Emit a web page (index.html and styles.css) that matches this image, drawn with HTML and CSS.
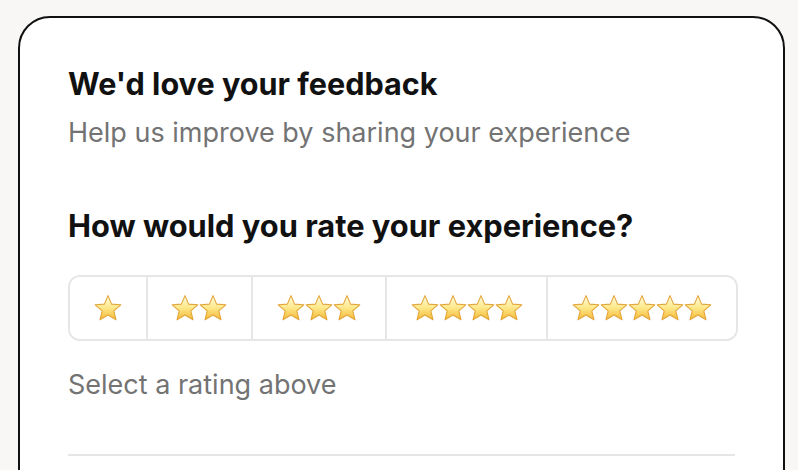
FILE: index.html
```html
<!DOCTYPE html>
<html lang="en">
<head>
<meta charset="utf-8">
<title>Feedback</title>
<link rel="stylesheet" href="styles.css">
</head>
<body>
<svg class="defs" width="0" height="0" aria-hidden="true">
  <defs>
    <linearGradient id="starFill" x1="0" y1="0" x2="0" y2="1">
      <stop offset="0" stop-color="#fffbe2"/>
      <stop offset="0.5" stop-color="#fde88a"/>
      <stop offset="1" stop-color="#f4b936"/>
    </linearGradient>
    <symbol id="star" viewBox="0 0 28 28">
      <path d="M14 1.6 L17.6 10.1 L26.8 10.8 L19.8 16.9 L22 25.8 L14 21 L6 25.8 L8.2 16.9 L1.2 10.8 L10.4 10.1 Z" fill="url(#starFill)" stroke="#e3a53a" stroke-width="1.1" stroke-linejoin="round"/>
    </symbol>
  </defs>
</svg>
<main class="card">
  <h1 class="title">We'd love your feedback</h1>
  <p class="subtitle">Help us improve by sharing your experience</p>
  <h2 class="question">How would you rate your experience?</h2>
  <div class="rating">
    <button class="rate" aria-label="1 star"><svg class="star"><use href="#star"/></svg></button>
    <button class="rate" aria-label="2 stars"><svg class="star"><use href="#star"/></svg><svg class="star"><use href="#star"/></svg></button>
    <button class="rate" aria-label="3 stars"><svg class="star"><use href="#star"/></svg><svg class="star"><use href="#star"/></svg><svg class="star"><use href="#star"/></svg></button>
    <button class="rate" aria-label="4 stars"><svg class="star"><use href="#star"/></svg><svg class="star"><use href="#star"/></svg><svg class="star"><use href="#star"/></svg><svg class="star"><use href="#star"/></svg></button>
    <button class="rate" aria-label="5 stars"><svg class="star"><use href="#star"/></svg><svg class="star"><use href="#star"/></svg><svg class="star"><use href="#star"/></svg><svg class="star"><use href="#star"/></svg><svg class="star"><use href="#star"/></svg></button>
  </div>
  <p class="hint">Select a rating above</p>
  <hr class="rule">
</main>
</body>
</html>
```

FILE: styles.css
```css
* { box-sizing: border-box; }
html, body { height: 100%; }
body {
  margin: 0;
  padding: 16px 0 0 18px;
  background: #f8f7f5;
  font-family: Inter, "Noto Sans", "Liberation Sans", sans-serif;
  overflow: hidden;
}
.defs { position: absolute; width: 0; height: 0; }
.card {
  width: 767px;
  min-height: 600px;
  background: #fff;
  border: 2px solid #111;
  border-radius: 32px;
  padding: 48px 45px 0 48px;
}
.title {
  margin: 0;
  font-size: 30.6px;
  line-height: 36px;
  font-weight: 700;
  color: #111;
}
.subtitle {
  margin: 13px 0 0;
  font-size: 27px;
  line-height: 36px;
  color: #737373;
}
.question {
  margin: 57px 0 0;
  font-size: 30.8px;
  line-height: 36px;
  font-weight: 700;
  color: #111;
}
.rating {
  display: flex;
  margin-top: 31px;
  border: 2px solid #e6e6e6;
  border-radius: 12px;
  overflow: hidden;
}
.rate {
  flex: 1 1 auto;
  display: flex;
  justify-content: center;
  align-items: center;
  height: 62px;
  padding: 0 20px;
  background: #fff;
  border: 0;
  border-right: 2px solid #e6e6e6;
}
.rate:last-child { border-right: 0; }
.star { width: 28px; height: 28px; display: block; }
.hint {
  margin: 26px 0 0;
  font-size: 27px;
  line-height: 36px;
  color: #737373;
}
.rule {
  margin: 51px 3px 0 0;
  border: 0;
  border-top: 2px solid #e6e6e6;
}
```
